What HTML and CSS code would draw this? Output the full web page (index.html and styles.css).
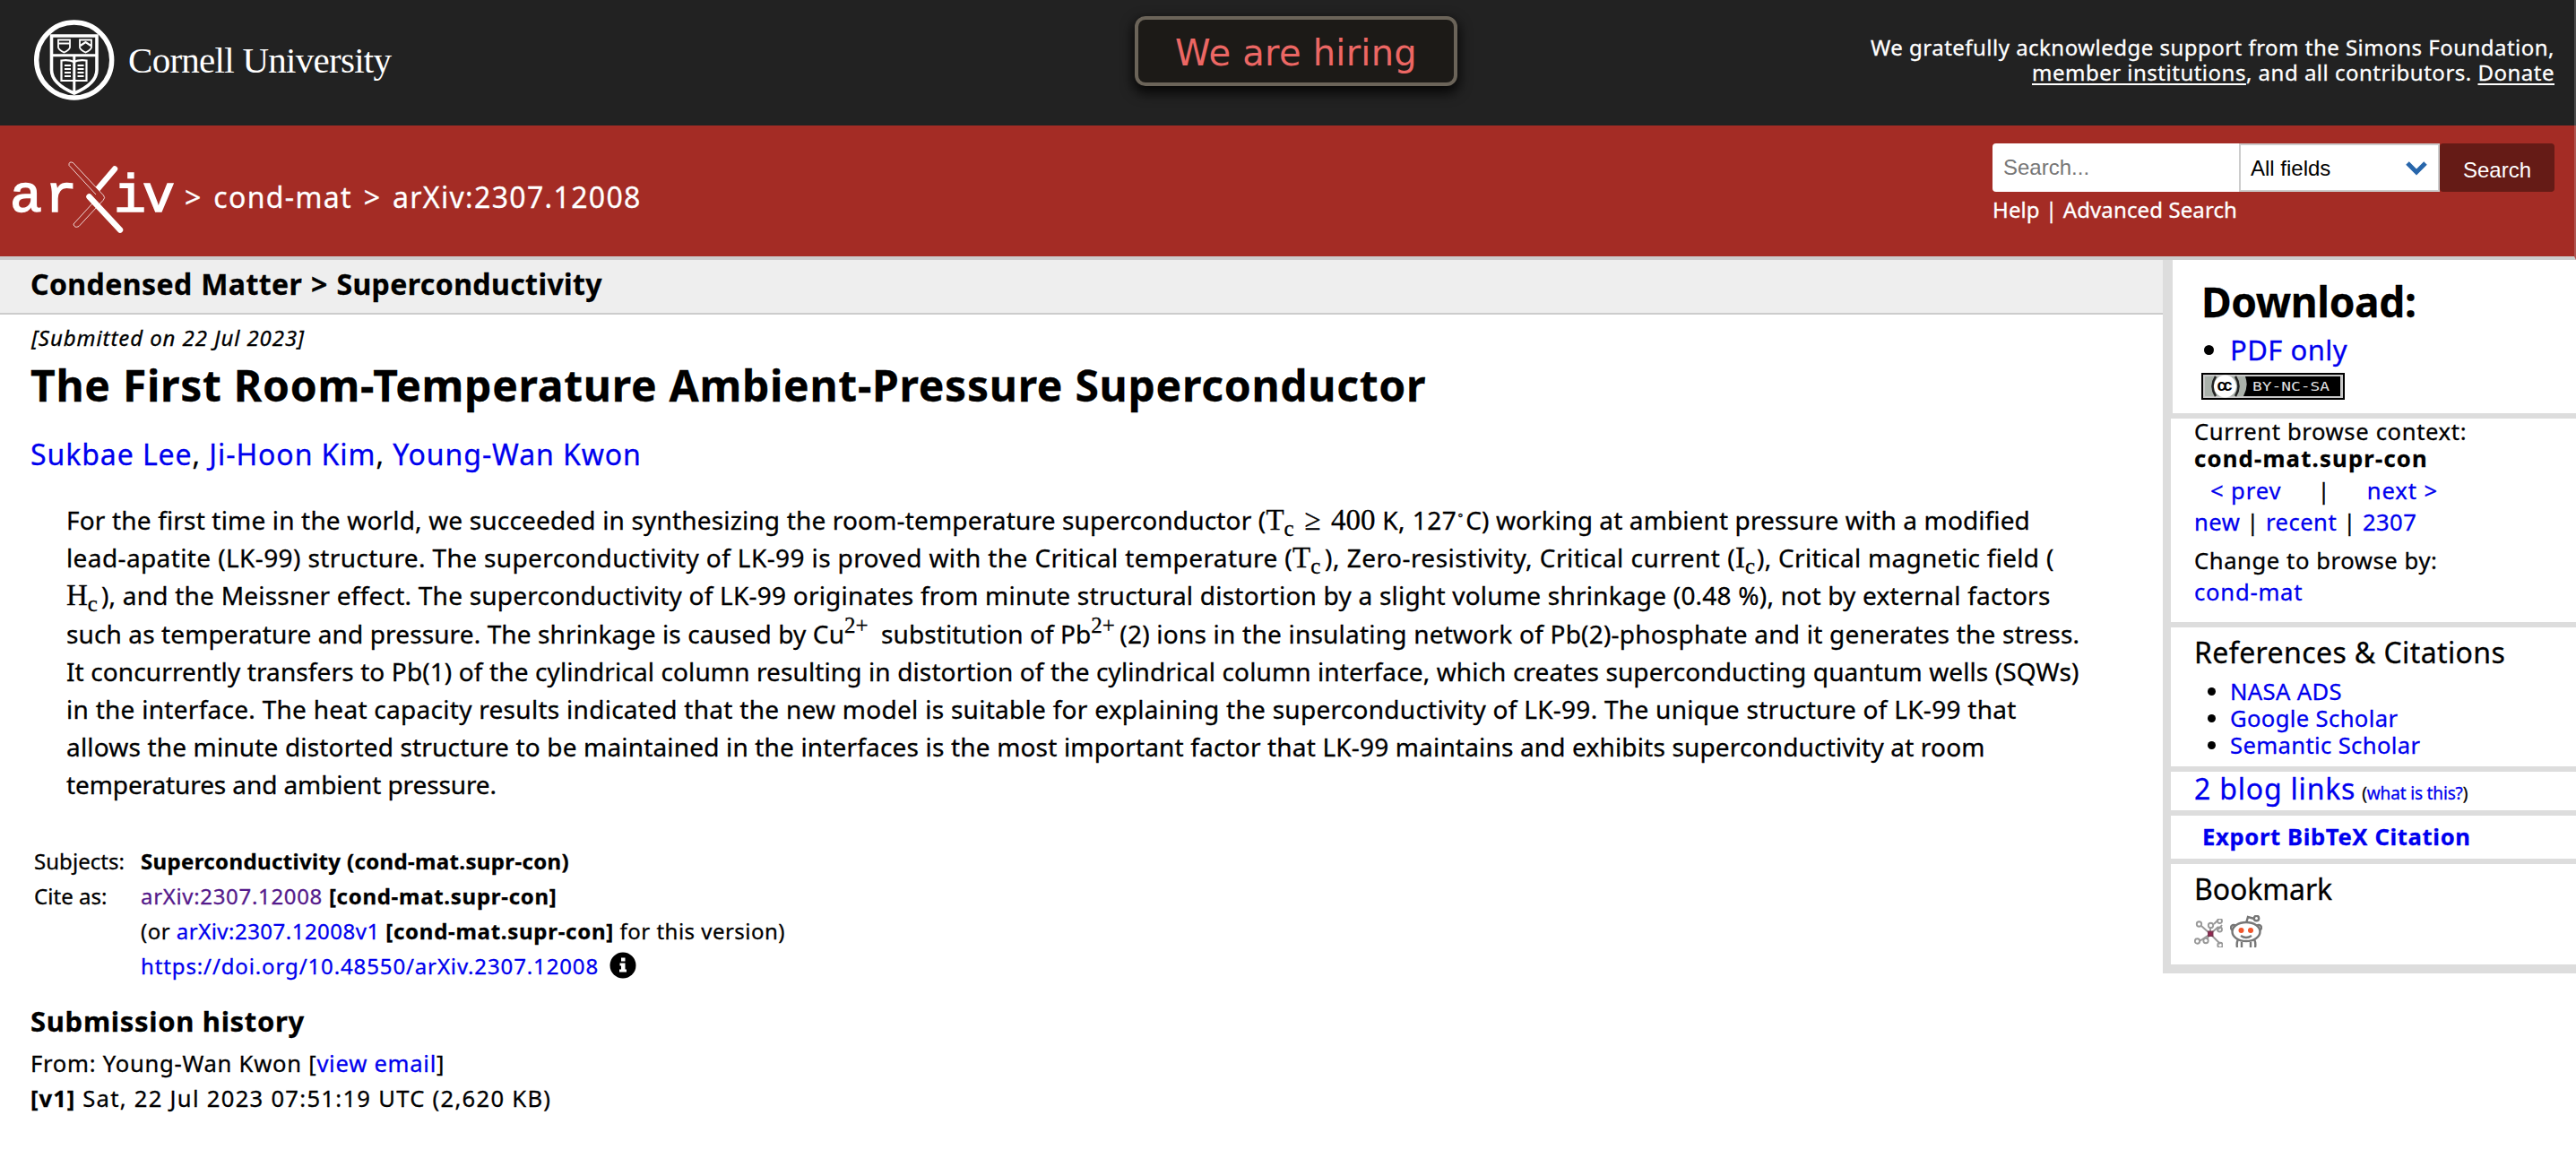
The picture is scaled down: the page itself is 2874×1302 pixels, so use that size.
FILE: index.html
```html
<!DOCTYPE html>
<html lang="en">
<head>
    <meta charset="UTF-8">
    <meta name="viewport" content="width=device-width, initial-scale=1.0">
    <title>[2307.12008] The First Room-Temperature Ambient-Pressure Superconductor</title>
    <link rel="stylesheet" href="styles.css">
</head>
<body>

    <!-- Cornell bar -->
    <header class="cu-bar">
        <svg class="cu-logo" width="460" height="140" viewBox="0 0 460 140">
            <circle cx="82.7" cy="67" r="42" fill="none" stroke="#fff" stroke-width="5.4"/>
            <g fill="none" stroke="#fff">
                <path d="M57.5 40h50.5v38c0 12-11 20-25.200 26-14.300-6-25.300-14-25.300-26z" stroke-width="3.600"/>
                <path d="M57 61.700h51M82.800 62v42" stroke-width="3"/>
                <path d="M65 44.500h13v8.500q-1 3-6.500 5.500-5.500-2.500-6.500-5.500zM89 44.500h13v8.500q-1 3-6.500 5.500-5.500-2.500-6.500-5.500z" stroke-width="1.800"/>
                <path d="M65 48.500h13M89.500 51l6-4 6 4M68.500 67.500q9-1 14 1.500 5-2.500 14-1.500v22.500h-28z" stroke-width="2.200"/>
                <path d="M72 73h7M72 77h7M72 81h7M72 85h7M86.500 73h7M86.500 77h7M86.500 81h7M86.500 85h7" stroke-width="1.800"/>
            </g>
            <text class="cu-name" x="143" y="81" textLength="294">Cornell University</text>
        </svg>
        <a class="hiring">We are hiring</a>
        <div class="support">
            <div class="support-1">We gratefully acknowledge support from the Simons Foundation,</div>
            <div class="support-2"><u>member institutions</u>, and all contributors. <u>Donate</u></div>
        </div>
    </header>

    <!-- arXiv bar -->
    <div class="arxiv-bar">
        <svg class="arxiv-logo" width="200" height="146" viewBox="0 140 200 146">
            <text class="logo-text" y="236" x="11 50 127 159">ariv</text>
            <path d="M128 188.500L108 212" stroke="#fff" stroke-width="6.500" stroke-linecap="round"/>
            <path d="M77 184.500Q76.500 179.500 81.500 181.500L115.500 218Q118 220.500 115 223.500L88 252.500Q83 255 82 250L104 226M77 184.500L107 217" fill="#a42c25" stroke="#fff" stroke-width="0.800"/>
            <path d="M99.500 219.500L134 256.500" stroke="#fff" stroke-width="6.500" stroke-linecap="round"/>
        </svg>
        <div class="crumbs">&gt; cond-mat &gt; arXiv:2307.12008</div>
        <div class="search">
            <div class="search-row">
                <span class="search-input">Search...</span>
                <span class="search-select">All fields
                    <svg width="26" height="18" viewBox="0 0 26 18"><path d="M3 4l10 10L23 4" fill="none" stroke="#2866ab" stroke-width="5"/></svg>
                </span>
                <span class="search-button">Search</span>
            </div>
            <div class="search-help">Help | Advanced Search</div>
        </div>
    </div>

    <div class="content">
        <main>
            <div class="subheader">Condensed Matter &gt; Superconductivity</div>
            <div class="dateline">[Submitted on 22 Jul 2023]</div>
            <h1>The First Room-Temperature Ambient-Pressure Superconductor</h1>
            <div class="authors"><a>Sukbae Lee</a>, <a>Ji-Hoon Kim</a>, <a>Young-Wan Kwon</a></div>

            <div class="abstract">
                <div><span class="ls-2">For the first time in the world, we succeeded in synthesizing the room-temperature superconductor (</span><span class="math m-tc400"><span>T<sub>c</sub></span><b>≥</b><span>400</span></span><span class="ls-5">&nbsp;K, 127</span><span class="deg">∘</span><span class="ls-1b">C) working at ambient pressure with a modified</span></div>
                <div><span class="ls-4">lead-apatite (LK-99) structure. The superconductivity of LK-99 is proved with the Critical temperature (</span><span class="math m-tc">T<sub>c</sub></span><span class="ls-5">), Zero-resistivity, Critical current (</span><span class="math m-ic">I<sub>c</sub></span><span class="ls-3">), Critical magnetic field (</span></div>
                <div><span class="math m-hc">H<sub>c</sub></span><span class="ls-2b">), and the Meissner effect. The superconductivity of LK-99 originates from minute structural distortion by a slight volume shrinkage (0.48 %), not by external factors</span></div>
                <div><span class="ls-1b">such as temperature and pressure. The shrinkage is caused by Cu</span><span class="math m-cu"><sup>2+</sup></span><span class="ls-1">substitution of Pb</span><span class="math m-pb"><sup>2+</sup></span><span class="ls-2b">(2) ions in the insulating network of Pb(2)-phosphate and it generates the stress.</span></div>
                <div><span class="ls-1b">It concurrently transfers to Pb(1) of the cylindrical column resulting in distortion of the cylindrical column interface, which creates superconducting quantum wells (SQWs)</span></div>
                <div><span class="ls-3">in the interface. The heat capacity results indicated that the new model is suitable for explaining the superconductivity of LK-99. The unique structure of LK-99 that</span></div>
                <div><span class="ls-2">allows the minute distorted structure to be maintained in the interfaces is the most important factor that LK-99 maintains and exhibits superconductivity at room</span></div>
                <div><span class="ls-0">temperatures and ambient pressure.</span></div>
            </div>

            <div class="metatable">
                <div class="label">Subjects:</div>
                <div><b>Superconductivity (cond-mat.supr-con)</b></div>
                <div class="label">Cite as:</div>
                <div><a class="visited">arXiv:2307.12008</a> <b class="cat">[cond-mat.supr-con]</b></div>
                <div></div>
                <div class="this-version">(or <a>arXiv:2307.12008v1</a> <b class="cat">[cond-mat.supr-con]</b> for this version)</div>
                <div></div>
                <div class="doi"><a>https://doi.org/10.48550/arXiv.2307.12008</a>
                    <svg width="30" height="30" viewBox="0 0 30 30"><circle cx="15" cy="15" r="14.500"/><path d="M13 6.500h4.500v4H13zM11.500 12.500h6v7h1.500v3h-8v-3h2v-4h-1.500z" fill="#fff"/></svg>
                </div>
            </div>

            <h2>Submission history</h2>
            <div class="history from">From: Young-Wan Kwon [<a>view email</a>]</div>
            <div class="history version"><b>[v1]</b> Sat, 22 Jul 2023 07:51:19 UTC (2,620 KB)</div>
        </main>

        <!-- Sidebar -->
        <aside>
            <section class="download">
                <div class="download-title">Download:</div>
                <div class="pdf"><a>PDF only</a></div>
                <svg class="cc" width="160" height="30" viewBox="0 0 160 30">
                    <rect width="160" height="30"/>
                    <rect x="2" y="2" width="156" height="26" fill="#c8c8c8"/>
                    <rect x="4" y="4" width="46" height="22" fill="#aab2ab"/>
                    <path d="M49 4h106v22H47q6-11 2-22z"/>
                    <circle cx="26.500" cy="15" r="12.500" fill="#fff"/>
                    <path d="M16 4q-7 11 0 22M38 4q7 11 0 22" fill="none" stroke="#222" stroke-width="2.500"/>
                    <text class="cc-c" x="17.500" y="20" textLength="17">cc</text>
                    <text class="cc-label" x="57" y="20" textLength="86" lengthAdjust="spacingAndGlyphs">BY-NC-SA</text>
                </svg>
            </section>
            <section class="browse">
                <div class="current">Current browse context:</div>
                <div class="context">cond-mat.supr-con</div>
                <div class="prevnext"><a>&lt; prev</a><span>|</span><a>next &gt;</a></div>
                <div class="list"><a>new</a> | <a>recent</a> | <a>2307</a></div>
                <div class="change">Change to browse by:</div>
                <div class="switch"><a>cond-mat</a></div>
            </section>
            <section class="refs">
                <h3>References &amp; Citations</h3>
                <ul>
                    <li><a>NASA ADS</a></li>
                    <li><a>Google Scholar</a></li>
                    <li><a>Semantic Scholar</a></li>
                </ul>
            </section>
            <section class="blog"><a class="blog-links">2 blog links</a><span class="what">(<a>what is this?</a>)</span></section>
            <section class="export"><a>Export BibTeX Citation</a></section>
            <section class="bookmark">
                <h3>Bookmark</h3>
                <div class="icons">
                    <svg width="32" height="32" viewBox="0 0 32 32" fill="none" stroke="#999" stroke-width="1.900">
                        <path d="M8 8l10 9 11 11M18 17L6 25M18 17l-4 6M18 17l0-7M18 17l9-8M22 6l5-5M27 12l4-5"/>
                        <circle cx="5.500" cy="6" r="2.700"/><circle cx="18.500" cy="7.500" r="2.700"/><circle cx="28.500" cy="2.500" r="2.500"/><circle cx="28.500" cy="12" r="2.500"/>
                        <circle cx="3.500" cy="25" r="2.700"/><circle cx="13" cy="24.500" r="2.700"/><circle cx="29" cy="29.500" r="2.700"/>
                        <rect x="16" y="14.500" width="4.500" height="4.500" fill="#9c2450" stroke="#7c3350"/>
                    </svg>
                    <svg width="36" height="36" viewBox="0 0 36 36" fill="none" stroke="#777" stroke-width="2.400">
                        <circle cx="4" cy="14" r="3"/><circle cx="32" cy="14" r="3"/>
                        <path d="M18 9l2-7 7 2"/><circle cx="29.500" cy="3.500" r="2.700"/>
                        <path d="M9 27q-2 4-1 9M27 27q2 4 1 9M13 30v6M23 30v6"/>
                        <ellipse cx="18" cy="18.500" rx="15.500" ry="10.500" fill="#fff"/>
                        <path d="M12 23q6 4 12 0"/>
                        <circle cx="12.500" cy="17" r="3" fill="#f0562b" stroke="none"/><circle cx="23" cy="17" r="3" fill="#f0562b" stroke="none"/>
                    </svg>
                </div>
            </section>
        </aside>
    </div>

</body>
</html>
```
FILE: styles.css
```css
* {
    box-sizing: border-box;
}
body {
    margin: 0;
    background-color: #fff;
    color: #000;
    font-family: "Noto Sans", "Open Sans", sans-serif;
    white-space: nowrap;
    overflow: hidden;
    -webkit-text-stroke: 0.3px;
}
a {
    color: #0000ee;
}
a.visited {
    color: #551a8b;
}
svg {
    display: block;
}

/* top bars */
.cu-bar {
    display: grid;
    grid-template-columns: 1fr 360px 1fr;
    height: 140px;
    padding-right: 22px;
    background-color: #222;
    border-right: 2px solid #4c4c4c;
}
.cu-name {
    fill: #fff;
    font-family: "Liberation Serif", serif;
    font-size: 41px;
}
.hiring {
    height: 78px;
    margin: 18px -21px 0 21px;
    border: 4px solid #6b6459;
    border-radius: 12px;
    background-color: #1c1a17;
    box-shadow: 0 6px 14px 2px rgba(0, 0, 0, 0.8);
    color: #ec6764;
    font-family: "DejaVu Sans", sans-serif;
    font-size: 40px;
    line-height: 74px;
    letter-spacing: 0.006em;
    text-align: center;
    -webkit-text-stroke: 0;
}
.support {
    padding-top: 39px;
    color: #fff;
    font-size: 24px;
    line-height: 28px;
    text-align: right;
}
.support-1 {
    letter-spacing: 0.02em;
}
.support-2 {
    letter-spacing: 0.0208em;
}
.support u {
    text-decoration-thickness: 2px;
    text-underline-offset: 3px;
}
.arxiv-bar {
    display: flex;
    height: 150px;
    padding-right: 22px;
    background-color: #a42c25;
    border-right: 2px solid #b25550;
    border-bottom: 4px solid #ccc;
}
.logo-text {
    fill: #fff;
    stroke: #fff;
    stroke-width: 1.5px;
    font-family: "Liberation Mono", monospace;
    font-size: 60px;
    -webkit-text-stroke: 1.8px #fff;
}
.crumbs {
    margin: 60px 0 0 6px;
    color: #fff;
    font-size: 32px;
    line-height: 40px;
    letter-spacing: 0.042em;
    word-spacing: 3px;
}
.search {
    width: 627px;
    margin-left: auto;
    padding-top: 20px;
}
.search-row {
    display: flex;
    height: 54px;
    font-family: "Liberation Sans", Arial, sans-serif;
    font-size: 24px;
    line-height: 53px;
    -webkit-text-stroke: 0;
}
.search-input {
    width: 275px;
    padding-left: 12px;
    border-radius: 4px 0 0 4px;
    background-color: #fff;
    color: #767676;
}
.search-select {
    display: flex;
    justify-content: space-between;
    align-items: center;
    width: 224px;
    padding: 0 11px;
    border: 2px solid #ccc;
    background-color: #fff;
}
.search-button {
    width: 128px;
    border-radius: 4px;
    background-color: #651b16;
    color: #fff;
    line-height: 59px;
    text-align: center;
}
.search-help {
    color: #fff;
    font-size: 24px;
    line-height: 40px;
    letter-spacing: 0.0046em;
}

/* page columns */
.content {
    display: flex;
    align-items: flex-start;
}
main {
    width: 2413px;
}
.subheader {
    height: 61px;
    padding-left: 34px;
    border-bottom: 2px solid #ccc;
    background-color: #eee;
    font-size: 32px;
    font-weight: bold;
    line-height: 54px;
    letter-spacing: 0.0127em;
    word-spacing: 1px;
}
.dateline {
    margin: 11px 0 0 35px;
    font-size: 24px;
    font-style: italic;
    line-height: 30px;
    letter-spacing: 0.038em;
}
h1 {
    margin: 8px 0 0 34px;
    font-size: 48px;
    line-height: 60px;
    letter-spacing: 0.015em;
}
.authors {
    margin: 27px 0 0 34px;
    font-size: 32px;
    line-height: 40px;
    letter-spacing: 0.029em;
}

/* abstract */
.abstract {
    margin: 32px 0 0 74px;
    font-size: 28px;
}
.abstract > div {
    display: flex;
    height: 42.2px;
    line-height: 42.2px;
}
.abstract span {
    white-space: pre;
}
.ls-0 {
    letter-spacing: -0.0037em;
}
.ls-1 {
    letter-spacing: 0.0025em;
}
.ls-1b {
    letter-spacing: 0.0042em;
}
.ls-2 {
    letter-spacing: 0.006em;
}
.ls-2b {
    letter-spacing: 0.008em;
}
.ls-3 {
    letter-spacing: 0.01em;
}
.ls-4 {
    letter-spacing: 0.0139em;
}
.ls-5 {
    letter-spacing: 0.0171em;
}
.math {
    font-family: "Liberation Serif", serif;
    font-size: 33px;
}
.math sub,
.math sup {
    font-size: 25px;
    line-height: 0;
}
.math sub {
    vertical-align: -7px;
}
.math sup {
    vertical-align: 12px;
}
.math b {
    font-weight: normal;
}
.m-tc400 {
    display: flex;
    justify-content: space-between;
    width: 122px;
}
.m-tc {
    width: 36px;
}
.m-ic {
    width: 24px;
}
.m-hc {
    width: 39px;
}
.m-cu {
    width: 41px;
}
.m-pb {
    width: 32px;
}
.deg {
    width: 10px;
    font-size: 14px;
    line-height: 30px;
}

/* metadata */
.metatable {
    display: grid;
    grid-template-columns: 119px 1fr;
    grid-auto-rows: 39px;
    margin: 44px 0 0 38px;
    font-size: 24px;
    line-height: 39px;
    letter-spacing: 0.028em;
}
.metatable .label {
    letter-spacing: 0.0018em;
}
.metatable b {
    letter-spacing: 0.0149em;
}
.metatable b.cat {
    letter-spacing: 0.03em;
}
.metatable .this-version {
    letter-spacing: 0.02em;
}
.doi {
    display: flex;
    align-items: center;
    gap: 12px;
    letter-spacing: 0.0364em;
}
h2 {
    margin: 22px 0 8px 34px;
    font-size: 31px;
    line-height: 40px;
    letter-spacing: 0.0221em;
}
.history {
    margin-left: 34px;
    font-size: 25.6px;
    line-height: 39.4px;
}
.from {
    letter-spacing: 0.029em;
}
.version {
    letter-spacing: 0.0501em;
}
.version b {
    letter-spacing: 0.04em;
}

/* sidebar */
aside {
    width: 461px;
    border-left: 9px solid #ddd;
    border-bottom: 4px solid #ddd;
    font-size: 25.6px;
    line-height: 30px;
}
section {
    padding-left: 26px;
    border-bottom: 6px solid #ddd;
}
.download {
    height: 177px;
    padding: 18px 0 0 32px;
    border-left: 2px solid #ddd;
}
.download-title {
    font-size: 46px;
    font-weight: bold;
    line-height: 56px;
    letter-spacing: -0.008em;
}
.pdf {
    display: list-item;
    margin: 6px 0 6px 32px;
    list-style: disc;
    font-size: 31px;
    line-height: 40px;
    letter-spacing: 0.0151em;
}
.cc-c {
    font-family: "Liberation Sans", sans-serif;
    font-size: 18px;
    font-weight: bold;
}
.cc-label {
    fill: #e4e4e4;
    font-family: "DejaVu Sans Mono", monospace;
    font-size: 14px;
}
.browse {
    height: 233px;
}
.current {
    letter-spacing: 0.0251em;
}
.context {
    font-weight: bold;
    letter-spacing: 0.0484em;
}
.prevnext {
    display: flex;
    justify-content: space-between;
    width: 254px;
    margin: 6px 0 5px 18px;
    letter-spacing: 0.035em;
}
.list {
    letter-spacing: 0.018em;
}
.change {
    margin: 13px 0 5px;
    letter-spacing: 0.023em;
}
.switch {
    letter-spacing: 0.03em;
}
.refs {
    height: 161px;
    padding-top: 8px;
}
h3 {
    margin: 0;
    font-size: 32px;
    font-weight: normal;
    line-height: 40px;
    letter-spacing: 0.0125em;
}
ul {
    margin: 9px 0 0;
    padding-left: 40px;
    letter-spacing: 0.0143em;
}
.blog {
    display: flex;
    align-items: baseline;
    gap: 7px;
    height: 49px;
    line-height: 37px;
}
.blog-links {
    font-size: 32px;
    letter-spacing: 0.025em;
}
.what {
    font-size: 19px;
    letter-spacing: -0.0082em;
}
.export {
    height: 54px;
    padding: 9px 0 0 35px;
    font-weight: bold;
    letter-spacing: 0.0253em;
}
.bookmark {
    height: 118px;
    padding-top: 8px;
}
.bookmark h3 {
    letter-spacing: -0.003em;
}
.icons {
    display: flex;
    align-items: flex-end;
    gap: 8px;
    margin-top: 9px;
}
```
